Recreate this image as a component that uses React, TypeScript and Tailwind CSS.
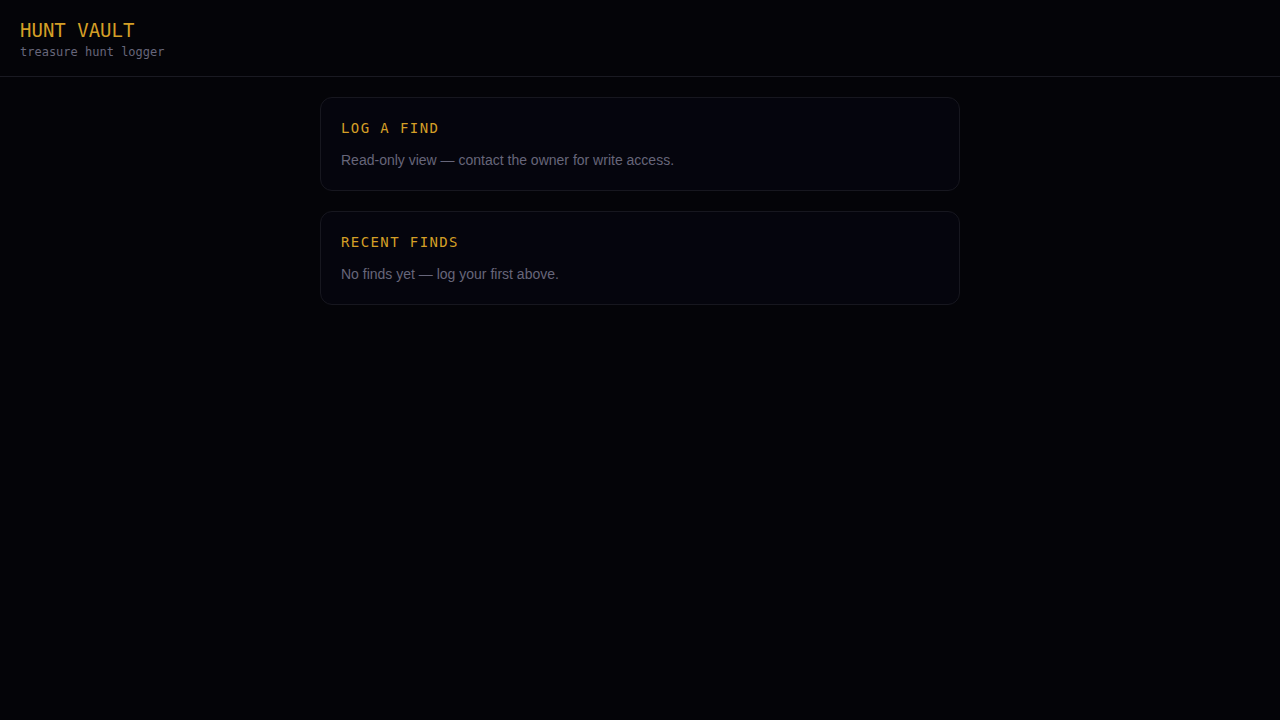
import React from 'react';

const mono = { fontFamily: '"DejaVu Sans Mono", "Liberation Mono", monospace' };
const sans = { fontFamily: '"Liberation Sans", Arial, sans-serif' };

const Card: React.FC<{ title: string; children: React.ReactNode }> = ({ title, children }) => (
  <section className="bg-[#05050d] border border-[#17171f] rounded-xl p-5">
    <h2 className="text-sm leading-5 tracking-widest text-[#d49f26] mb-3" style={mono}>
      {title}
    </h2>
    <p className="text-sm leading-5 text-[#67667a]" style={sans}>
      {children}
    </p>
  </section>
);

export default function App() {
  return (
    <div className="min-h-screen bg-[#040408]">
      <header className="px-5 py-4 border-b border-[#1a1a22]">
        <h1 className="text-[19px] leading-7 text-[#d49f26]" style={mono}>HUNT VAULT</h1>
        <p className="text-xs leading-4 text-[#67667a]" style={mono}>treasure hunt logger</p>
      </header>
      <main className="w-[640px] mx-auto pt-5 flex flex-col gap-5">
        <Card title="LOG A FIND">Read-only view — contact the owner for write access.</Card>
        <Card title="RECENT FINDS">No finds yet — log your first above.</Card>
      </main>
    </div>
  );
}
